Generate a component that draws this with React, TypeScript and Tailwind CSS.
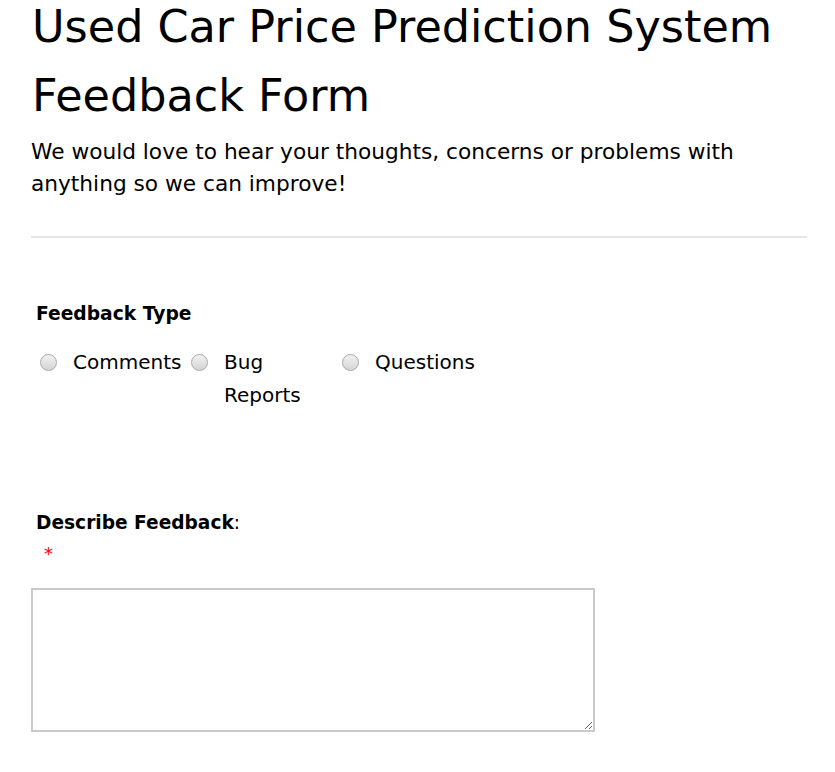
import React from 'react';

const Radio: React.FC<{ label: string }> = ({ label }) => (
    <label className="flex items-start w-[151px]">
        <span className="mt-[8px] ml-[4px] w-[17px] h-[17px] rounded-full border border-[#a9a9a9] bg-gradient-to-b from-[#f2f2f2] to-[#d4d4d4] shrink-0" />
        <span className="ml-[16px] w-[114px] leading-[33px]">{label}</span>
    </label>
);

const App: React.FC = () => {
    return (
        <div className="bg-white text-black min-h-screen" style={{ fontFamily: '"DejaVu Sans", sans-serif' }}>
            <div className="pl-[31px] pr-[28px]">
                <h1 className="text-[44.5px] leading-[69px] -mt-[8px] pl-[1px]">
                    Used Car Price Prediction System Feedback Form
                </h1>
                <p className="text-[21.7px] leading-[32px] mt-[6px]">
                    We would love to hear your thoughts, concerns or problems with anything so we can improve!
                </p>
                <div className="mt-[36px] h-[2px] bg-[#e6e6e6]" />
            </div>

            <div className="pl-[36px] mt-[62px]">
                <div className="text-[18.7px] font-bold">Feedback Type</div>
                <div className="flex mt-[18px] text-[20px]">
                    <Radio label="Comments" />
                    <Radio label="Bug Reports" />
                    <Radio label="Questions" />
                </div>
            </div>

            <div className="pl-[36px] mt-[97px]">
                <div className="text-[18.6px]">
                    <span className="font-bold">Describe Feedback</span>:
                </div>
                <div className="pl-[8px] text-[red] text-[18px] leading-[28px] mt-[3px]">*</div>
            </div>

            <div className="pl-[31px] mt-[20px] pb-[40px]">
                <textarea className="block w-[564px] h-[144px] border-2 border-[#cacaca] bg-white resize" />
            </div>
        </div>
    );
};

export default App;
